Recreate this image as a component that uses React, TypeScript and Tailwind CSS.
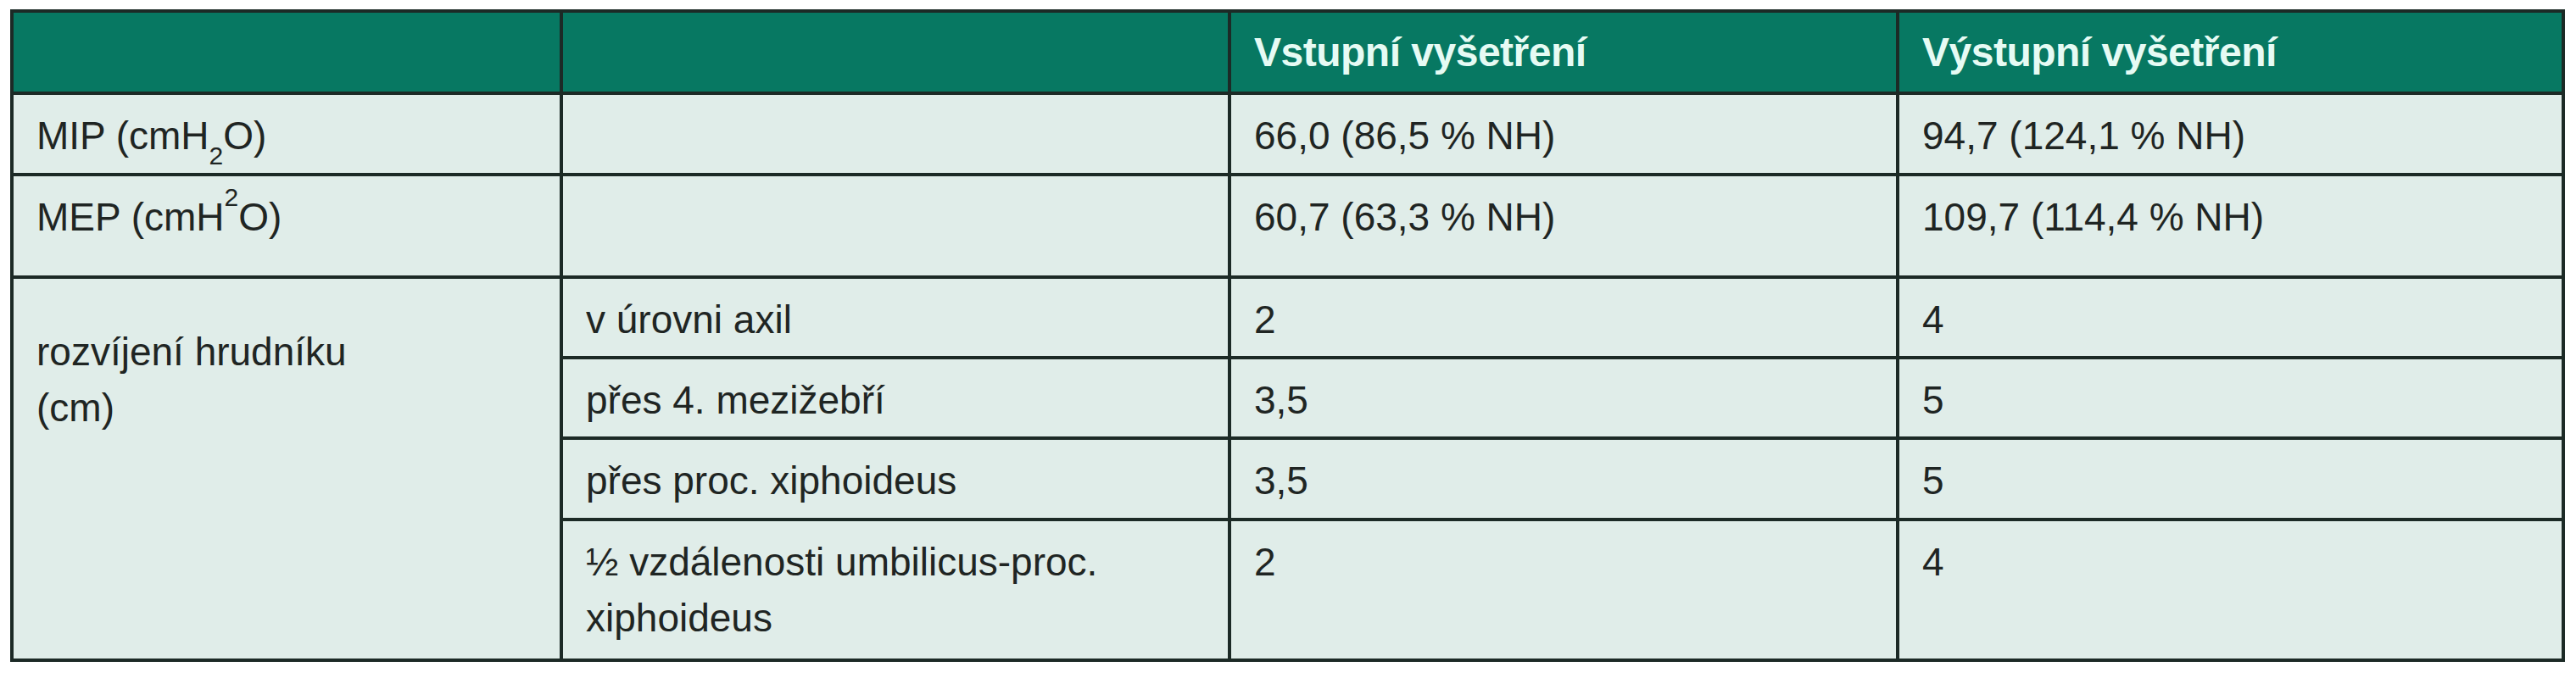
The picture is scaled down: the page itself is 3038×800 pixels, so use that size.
export default function App() {
  const cell = 'border-[4px] border-[#1c2a26] align-top pl-[27px] pr-4 pt-[15px] leading-[66px]';
  const head = 'border-[4px] border-[#1c2a26] align-middle pl-[27px] pr-4 font-bold text-[48px] text-[#e6fbf4] tracking-[-0.5px]';

  const rows = [
    { sub: 'v úrovni axil', a: '2', b: '4', h: 'h-[95px]' },
    { sub: 'přes 4. mezižebří', a: '3,5', b: '5', h: 'h-[95px]' },
    { sub: 'přes proc. xiphoideus', a: '3,5', b: '5', h: 'h-[96px]' },
    { sub: '½ vzdálenosti umbilicus-proc. xiphoideus', a: '2', b: '4', h: 'h-[166px]' },
  ];

  return (
    <div className="w-[3038px] h-[800px] bg-white pt-[11px] pl-[12px] font-['Liberation_Sans',Arial,sans-serif] text-[46px] text-[#1f2523]">
      <table className="table-fixed border-collapse w-[3009px] bg-[#e0ede9]">
        <colgroup>
          <col className="w-[648px]" />
          <col className="w-[788px]" />
          <col className="w-[788px]" />
          <col className="w-[785px]" />
        </colgroup>
        <thead>
          <tr className="h-[97px] bg-[#077862]">
            <th className={head}></th>
            <th className={head}></th>
            <th className={`${head} text-left`}>Vstupní vyšetření</th>
            <th className={`${head} text-left`}>Výstupní vyšetření</th>
          </tr>
        </thead>
        <tbody>
          <tr className="h-[96px]">
            <td className={cell}>
              MIP (cmH<sub className="text-[30px] leading-none align-[-10px]">2</sub>O)
            </td>
            <td className={cell}></td>
            <td className={cell}>66,0 (86,5 % NH)</td>
            <td className={cell}>94,7 (124,1 % NH)</td>
          </tr>
          <tr className="h-[121px]">
            <td className={cell}>
              MEP (cmH<sup className="text-[30px] leading-none align-[14px]">2</sup>O)
            </td>
            <td className={cell}></td>
            <td className={cell}>60,7 (63,3 % NH)</td>
            <td className={cell}>109,7 (114,4 % NH)</td>
          </tr>
          {rows.map((r, i) => (
            <tr key={i} className={r.h}>
              {i === 0 && (
                <td rowSpan={4} className={`${cell} pt-[53px]`}>
                  rozvíjení hrudníku
                  <br />
                  (cm)
                </td>
              )}
              <td className={cell}>{r.sub}</td>
              <td className={cell}>{r.a}</td>
              <td className={cell}>{r.b}</td>
            </tr>
          ))}
        </tbody>
      </table>
    </div>
  );
}
